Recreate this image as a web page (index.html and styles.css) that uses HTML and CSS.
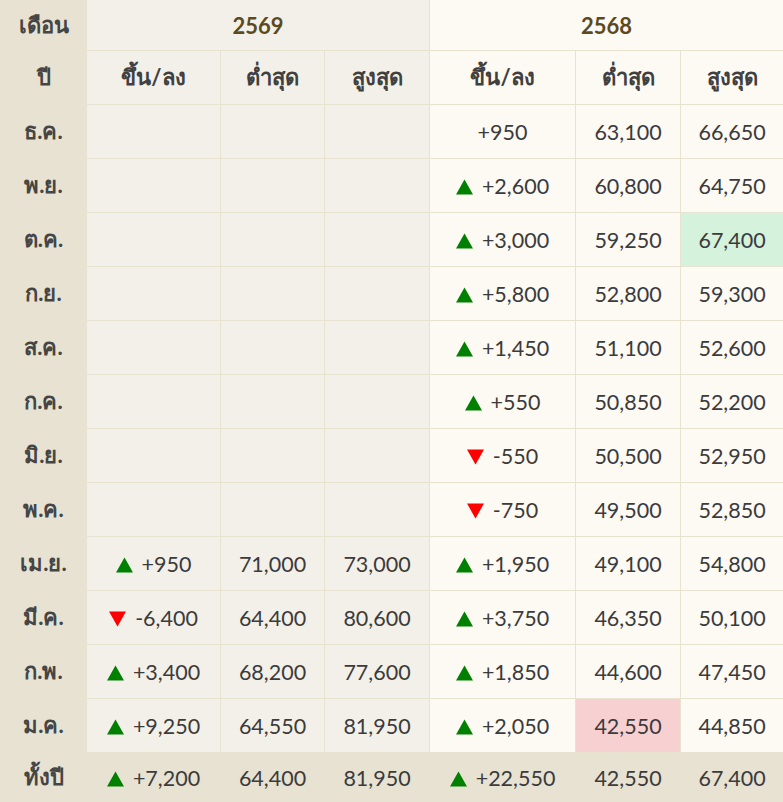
FILE: index.html
```html
<!DOCTYPE html>
<html lang="th">
<head>
<meta charset="utf-8">
<link rel="stylesheet" href="styles.css">
</head>
<body>
<table class="gold">
<colgroup>
<col class="c-m"><col class="c-a"><col class="c-b"><col class="c-c"><col class="c-d"><col class="c-e"><col class="c-f">
</colgroup>
<thead>
<tr class="r-year">
<th class="lab">เดือน</th>
<th class="y69" colspan="3">2569</th>
<th class="y68" colspan="3">2568</th>
</tr>
<tr class="r-sub">
<th class="lab">ปี</th>
<th class="y69">ขึ้น/ลง</th><th class="y69">ต่ำสุด</th><th class="y69">สูงสุด</th>
<th class="y68">ขึ้น/ลง</th><th class="y68">ต่ำสุด</th><th class="y68">สูงสุด</th>
</tr>
</thead>
<tbody>
<tr><th class="lab">ธ.ค.</th><td class="y69"></td><td class="y69"></td><td class="y69"></td><td class="y68">+950</td><td class="y68">63,100</td><td class="y68">66,650</td></tr>
<tr><th class="lab">พ.ย.</th><td class="y69"></td><td class="y69"></td><td class="y69"></td><td class="y68"><svg class="tri" viewBox="0 0 17 16"><path d="M8.5 0.5 L17 15.5 L0 15.5 Z" fill="#008000"/></svg>+2,600</td><td class="y68">60,800</td><td class="y68">64,750</td></tr>
<tr><th class="lab">ต.ค.</th><td class="y69"></td><td class="y69"></td><td class="y69"></td><td class="y68"><svg class="tri" viewBox="0 0 17 16"><path d="M8.5 0.5 L17 15.5 L0 15.5 Z" fill="#008000"/></svg>+3,000</td><td class="y68">59,250</td><td class="y68 hi">67,400</td></tr>
<tr><th class="lab">ก.ย.</th><td class="y69"></td><td class="y69"></td><td class="y69"></td><td class="y68"><svg class="tri" viewBox="0 0 17 16"><path d="M8.5 0.5 L17 15.5 L0 15.5 Z" fill="#008000"/></svg>+5,800</td><td class="y68">52,800</td><td class="y68">59,300</td></tr>
<tr><th class="lab">ส.ค.</th><td class="y69"></td><td class="y69"></td><td class="y69"></td><td class="y68"><svg class="tri" viewBox="0 0 17 16"><path d="M8.5 0.5 L17 15.5 L0 15.5 Z" fill="#008000"/></svg>+1,450</td><td class="y68">51,100</td><td class="y68">52,600</td></tr>
<tr><th class="lab">ก.ค.</th><td class="y69"></td><td class="y69"></td><td class="y69"></td><td class="y68"><svg class="tri" viewBox="0 0 17 16"><path d="M8.5 0.5 L17 15.5 L0 15.5 Z" fill="#008000"/></svg>+550</td><td class="y68">50,850</td><td class="y68">52,200</td></tr>
<tr><th class="lab">มิ.ย.</th><td class="y69"></td><td class="y69"></td><td class="y69"></td><td class="y68"><svg class="tri" viewBox="0 0 17 16"><path d="M0 0.5 L17 0.5 L8.5 15.5 Z" fill="#ff0000"/></svg>-550</td><td class="y68">50,500</td><td class="y68">52,950</td></tr>
<tr><th class="lab">พ.ค.</th><td class="y69"></td><td class="y69"></td><td class="y69"></td><td class="y68"><svg class="tri" viewBox="0 0 17 16"><path d="M0 0.5 L17 0.5 L8.5 15.5 Z" fill="#ff0000"/></svg>-750</td><td class="y68">49,500</td><td class="y68">52,850</td></tr>
<tr><th class="lab">เม.ย.</th><td class="y69"><svg class="tri" viewBox="0 0 17 16"><path d="M8.5 0.5 L17 15.5 L0 15.5 Z" fill="#008000"/></svg>+950</td><td class="y69">71,000</td><td class="y69">73,000</td><td class="y68"><svg class="tri" viewBox="0 0 17 16"><path d="M8.5 0.5 L17 15.5 L0 15.5 Z" fill="#008000"/></svg>+1,950</td><td class="y68">49,100</td><td class="y68">54,800</td></tr>
<tr><th class="lab">มี.ค.</th><td class="y69"><svg class="tri" viewBox="0 0 17 16"><path d="M0 0.5 L17 0.5 L8.5 15.5 Z" fill="#ff0000"/></svg>-6,400</td><td class="y69">64,400</td><td class="y69">80,600</td><td class="y68"><svg class="tri" viewBox="0 0 17 16"><path d="M8.5 0.5 L17 15.5 L0 15.5 Z" fill="#008000"/></svg>+3,750</td><td class="y68">46,350</td><td class="y68">50,100</td></tr>
<tr><th class="lab">ก.พ.</th><td class="y69"><svg class="tri" viewBox="0 0 17 16"><path d="M8.5 0.5 L17 15.5 L0 15.5 Z" fill="#008000"/></svg>+3,400</td><td class="y69">68,200</td><td class="y69">77,600</td><td class="y68"><svg class="tri" viewBox="0 0 17 16"><path d="M8.5 0.5 L17 15.5 L0 15.5 Z" fill="#008000"/></svg>+1,850</td><td class="y68">44,600</td><td class="y68">47,450</td></tr>
<tr><th class="lab">ม.ค.</th><td class="y69"><svg class="tri" viewBox="0 0 17 16"><path d="M8.5 0.5 L17 15.5 L0 15.5 Z" fill="#008000"/></svg>+9,250</td><td class="y69">64,550</td><td class="y69">81,950</td><td class="y68"><svg class="tri" viewBox="0 0 17 16"><path d="M8.5 0.5 L17 15.5 L0 15.5 Z" fill="#008000"/></svg>+2,050</td><td class="y68 lo">42,550</td><td class="y68">44,850</td></tr>
</tbody>
<tfoot>
<tr class="r-total"><th class="lab">ทั้งปี</th><td><svg class="tri" viewBox="0 0 17 16"><path d="M8.5 0.5 L17 15.5 L0 15.5 Z" fill="#008000"/></svg>+7,200</td><td>64,400</td><td>81,950</td><td><svg class="tri" viewBox="0 0 17 16"><path d="M8.5 0.5 L17 15.5 L0 15.5 Z" fill="#008000"/></svg>+22,550</td><td>42,550</td><td>67,400</td></tr>
</tfoot>
</table>
</body>
</html>
```
FILE: styles.css
```css
html, body {
  margin: 0;
  padding: 0;
  background: #fdf9f3;
}
.gold {
  width: 783px;
  table-layout: fixed;
  border-collapse: collapse;
  font-family: Lato, "Noto Sans", "DejaVu Sans", sans-serif;
  font-size: 21.5px;
  color: #3b3b3b;
}
.c-m { width: 86px; }
.c-a { width: 134px; }
.c-b { width: 104px; }
.c-c { width: 105px; }
.c-d { width: 146px; }
.c-e { width: 105px; }
.c-f { width: 103px; }
.gold th, .gold td {
  padding: 0;
  text-align: center;
  vertical-align: middle;
  border: 1px solid #e8e2d1;
  white-space: nowrap;
}
.gold tr { height: 54px; }
.gold .r-year { height: 50px; }
.gold .r-total { height: 50px; }
.gold th {
  font-size: 22px;
  font-weight: 700;
  color: #404040;
}
.gold th.lab {
  background: #e7e2d2;
  border-color: #e7e2d2;
  color: #454545;
}
.gold .y69 { background: #f3f0e9; }
.gold .y68 { background: #fdf9f3; }
.gold .r-year th.y69,
.gold .r-year th.y68 {
  color: #5c4a1e;
}
.gold .r-year th.y69 { border-top-color: #f3f0e9; border-right-color: #e8e2d1; }
.gold .r-year th.y68 { border-top-color: #fdf9f3; border-right-color: #fdf9f3; }
.gold td.y68:last-child, .gold th.y68:last-child { border-right-color: #fdf9f3; }
.gold .hi { background: #d4f2dc; }
.gold .lo { background: #f7d0d2; }
.gold .r-total th, .gold .r-total td {
  background: #e7e2d2;
  border-color: #e7e2d2;
}
.tri {
  width: 17px;
  height: 16px;
  margin-right: 9px;
  vertical-align: -1px;
}
```
